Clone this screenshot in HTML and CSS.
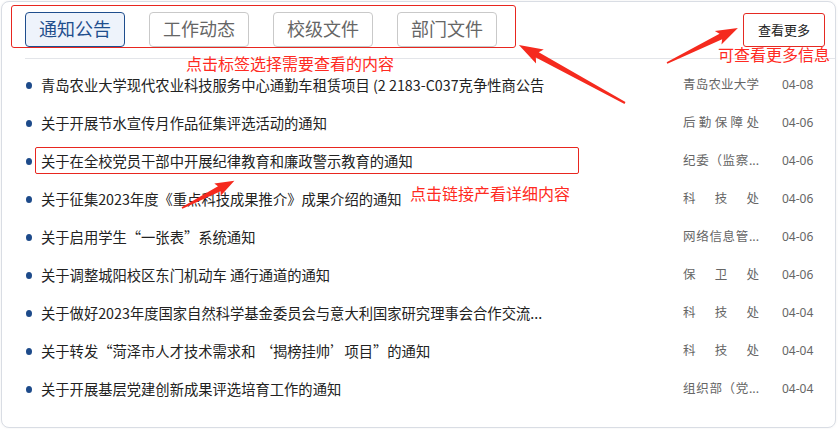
FILE: index.html
```html
<!DOCTYPE html>
<html lang="zh-CN">
<head>
<meta charset="utf-8">
<title>通知公告</title>
<link rel="stylesheet" href="styles.css">
</head>
<body>
<div class="card">
  <div class="header">
    <div class="tabs">
      <div class="tab active">通知公告</div>
      <div class="tab">工作动态</div>
      <div class="tab">校级文件</div>
      <div class="tab">部门文件</div>
    </div>
    <div class="more">查看更多</div>
  </div>
  <ul class="list">
    <li class="row"><span class="dot"></span><span class="title">青岛农业大学现代农业科技服务中心通勤车租赁项目 (2 2183-C037克争性商公告</span><span class="dept">青岛农业大学</span><span class="date">04-08</span></li>
    <li class="row"><span class="dot"></span><span class="title">关于开展节水宣传月作品征集评选活动的通知</span><span class="dept">后勤保障处</span><span class="date">04-06</span></li>
    <li class="row"><span class="dot"></span><span class="title">关于在全校党员干部中开展纪律教育和廉政警示教育的通知</span><span class="dept">纪委（监察...</span><span class="date">04-06</span></li>
    <li class="row"><span class="dot"></span><span class="title">关于征集2023年度《重点科技成果推介》成果介绍的通知</span><span class="dept">科技处</span><span class="date">04-06</span></li>
    <li class="row"><span class="dot"></span><span class="title">关于启用学生“一张表”系统通知</span><span class="dept">网络信息管...</span><span class="date">04-06</span></li>
    <li class="row"><span class="dot"></span><span class="title">关于调整城阳校区东门机动车 通行通道的通知</span><span class="dept">保卫处</span><span class="date">04-06</span></li>
    <li class="row"><span class="dot"></span><span class="title">关于做好2023年度国家自然科学基金委员会与意大利国家研究理事会合作交流...</span><span class="dept">科技处</span><span class="date">04-04</span></li>
    <li class="row"><span class="dot"></span><span class="title">关于转发“菏泽市人才技术需求和 ‘揭榜挂帅’项目”的通知</span><span class="dept">科技处</span><span class="date">04-04</span></li>
    <li class="row"><span class="dot"></span><span class="title">关于开展基层党建创新成果评选培育工作的通知</span><span class="dept">组织部（党...</span><span class="date">04-04</span></li>
  </ul>
</div>

<div class="ann-box ann-box-tabs"></div>
<div class="ann-box ann-box-link"></div>
<div class="ann-text ann-text-tabs">点击标签选择需要查看的内容</div>
<div class="ann-text ann-text-more">可查看更多信息</div>
<div class="ann-text ann-text-link">点击链接产看详细内容</div>

<svg class="arrows" width="839" height="429" viewBox="0 0 839 429" xmlns="http://www.w3.org/2000/svg">
  <g transform="translate(625 103) rotate(208.7)">
    <polygon points="0,-1 100,-3 97,-8 121,0 97,8 100,3 0,1"/>
  </g>
  <g transform="translate(667 63) rotate(-26.2)">
    <polygon points="0,-0.8 60,-3 57,-7.5 79,0 57,7.5 60,3 0,0.8"/>
  </g>
  <g transform="translate(182 208) rotate(-27.4)">
    <polygon points="0,-0.8 42,-2.8 40,-7 59,0 40,7 42,2.8 0,0.8"/>
  </g>
</svg>
</body>
</html>
```
FILE: styles.css
```css
* {
  box-sizing: border-box;
  margin: 0;
  padding: 0;
}

body {
  margin: 0;
  width: 839px;
  height: 429px;
  overflow: hidden;
  background: #fff;
  font-family: "Noto Sans", "Noto Sans CJK SC", sans-serif;
}

.card {
  margin: 1px 0 0 1px;
  width: 835px;
  height: 427px;
  border: 1px solid #d9dde4;
  border-radius: 8px;
  background: #fff;
  box-shadow: 0 0 3px rgba(0, 0, 0, 0.06);
}

.header {
  display: flex;
  align-items: flex-start;
  margin-left: 23px;
  padding: 10px 10px 11px 0;
  border-bottom: 1px solid #e3e5e9;
}

.tabs {
  display: flex;
  gap: 24px;
}

.tab {
  width: 100px;
  height: 35px;
  border: 1px solid #c9c9c9;
  border-radius: 4px;
  color: #666;
  font-size: 18px;
  line-height: 33px;
  text-align: center;
}

.tab.active {
  border-color: #1f4e8d;
  background: #eef3fb;
  color: #1f4e8d;
}

.more {
  margin-left: auto;
  margin-top: 1px;
  width: 82px;
  height: 34px;
  border: 1px solid #e52a22;
  border-radius: 3px;
  color: #222;
  font-size: 13px;
  line-height: 32px;
  text-align: center;
}

.list {
  list-style: none;
  padding: 7px 21px 0 24px;
}

.row {
  display: flex;
  align-items: center;
  height: 38px;
}

.dot {
  flex: none;
  width: 6px;
  height: 7px;
  border-radius: 50%;
  background: #1d4a8a;
  margin-right: 9px;
}

.title {
  flex: 1;
  min-width: 0;
  white-space: nowrap;
  overflow: hidden;
  text-overflow: ellipsis;
  color: #222;
  font-family: "Noto Sans CJK SC", "Noto Sans", sans-serif;
  font-size: 14.3px;
  line-height: 20px;
}

.dept {
  flex: none;
  width: 76px;
  white-space: nowrap;
  overflow: hidden;
  color: #666;
  font-size: 12.5px;
  line-height: 20px;
  text-align: justify;
  text-align-last: justify;
}

.date {
  flex: none;
  width: 32px;
  margin-left: 23px;
  white-space: nowrap;
  color: #666;
  font-size: 12px;
  line-height: 20px;
}

.ann-box {
  position: absolute;
  border: 1px solid #e8261f;
  border-radius: 3px;
  pointer-events: none;
}

.ann-box-tabs {
  left: 11px;
  top: 5px;
  width: 505px;
  height: 43px;
}

.ann-box-link {
  left: 35px;
  top: 147px;
  width: 544px;
  height: 27px;
  border-radius: 2px;
}

.ann-text {
  position: absolute;
  color: #ff2a22;
  font-size: 16px;
  line-height: 16px;
  white-space: nowrap;
}

.ann-text-tabs {
  left: 186px;
  top: 56px;
}

.ann-text-more {
  left: 718px;
  top: 47px;
}

.ann-text-link {
  left: 410px;
  top: 186px;
}

.arrows {
  position: absolute;
  left: 0;
  top: 0;
  pointer-events: none;
  fill: #f52a1e;
}
```
